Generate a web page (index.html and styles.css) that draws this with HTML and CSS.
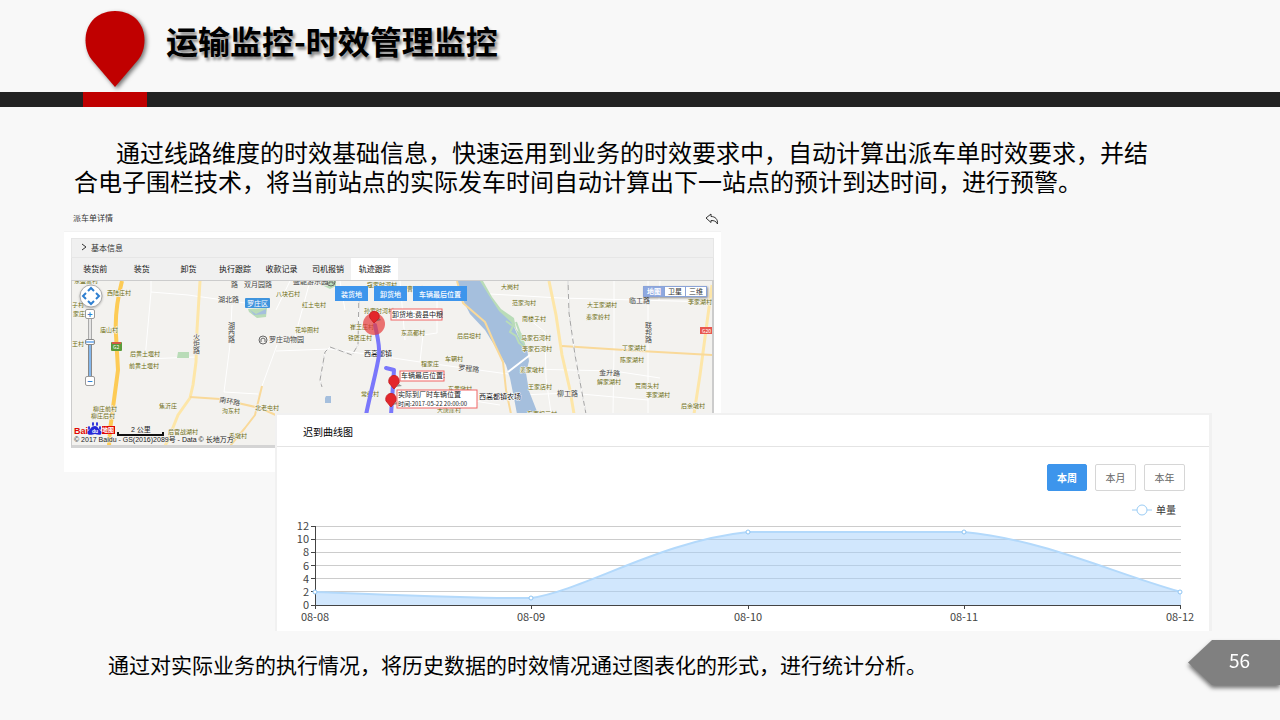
FILE: index.html
```html
<!DOCTYPE html>
<html lang="zh-CN">
<head>
<meta charset="utf-8">
<title>运输监控-时效管理监控</title>
<link rel="stylesheet" href="styles.css">
</head>
<body>
<header class="top">
  <svg class="top-pin" viewBox="0 0 64 80" aria-hidden="true"><path d="M32 77 L9 50 C-3 35 0 2 32 1 C64 2 67 35 55 50 Z"/></svg>
  <h1 class="title">运输监控-时效管理监控</h1>
</header>
<div class="band"><span class="band-mark"></span></div>
<main>
  <p class="intro">通过线路维度的时效基础信息，快速运用到业务的时效要求中，自动计算出派车单时效要求，并结合电子围栏技术，将当前站点的实际发车时间自动计算出下一站点的预计到达时间，进行预警。</p>
  <div class="stage">
    <section class="detail">
      <div class="detail-head">
        <h2>派车单详情</h2>
        <button class="back" aria-label="返回"><svg viewBox="0 0 14 12"><path d="M1 5 L6 1 V3.500 C10 3.500 13 6 12.500 11 C11 8 9 7.500 6 7.500 V9.500 Z"/></svg></button>
      </div>
      <div class="detail-body">
        <button class="fold"><svg viewBox="0 0 6 8"><path d="M1 1 L5 4 L1 7"/></svg>基本信息</button>
        <div class="tabs" role="tablist">
          <button role="tab">装货前</button><button role="tab">装货</button><button role="tab">卸货</button><button role="tab">执行跟踪</button><button role="tab">收款记录</button><button role="tab">司机报销</button><button role="tab" class="on" aria-selected="true">轨迹跟踪</button>
        </div>
        <div class="map">
          <svg class="map-art" viewBox="72 281 640 164" preserveAspectRatio="xMinYMin slice">
            <rect class="land" x="71" y="281" width="643" height="166"/>
            <g class="lane">
              <path d="M151 281 V292 L145 359 L196 357 M151 292 L188 295 L245 303 M232 305 L230 345 L224 392 L258 394 M277 345 L262 386 M276 351 L330 349 L380 356 L420 362 L508 374 M310 281 L294 340 M420 362 L423 335 L437 333 V290 M400 281 L405 340 M490 294 L560 298 L712 302 M614 281 V350 L613 413 M648 281 V413 M530 320 L545 332 L546 378 L551 413 M527 369 L614 371 L660 378 M520 395 L570 393 L648 400 M436 395 L500 405 M290 281 L276 310 M660 281 L659 300 M340 281 L345 310"/>
            </g>
            <path class="river" d="M457 281 H481 L490 296 L500 311 L511 320 L518 336 L527 349 L529 361 L526 373 L529 391 L538 414 H517 L514 398 L510 378 L506 365 L496 348 L485 330 L470 314 L463 300 Z"/>
            <path class="park" d="M480 281 H483 L492 297 L501 309 L514 318 L516 329 L523 337 L526 347 L520 341 L516 330 L511 322 L499 311 L490 297 Z"/>
            <path class="creek" d="M506 321 L513 326 L510 332 L516 336 L519 343 L524 347 M516 322 L520 333 L526 341"/>
            <path class="park" d="M178 352 H189 V358 H177 Z M248 309 L267 308 L266 317 L257 318 L249 312 Z M322 281 H336 V286 L330 289 L322 285 Z"/>
            <path class="water" d="M250 310 L256 314 L266 309 L266 314 L254 315 Z M326 396 H331 V403 H325 V398 Z"/>
            <path class="route-lite" d="M200 281 L197 330 L196 362 L193 385 L190 398 L178 415 L168 440 L165 446 M549 281 L556 315 L562 355 L570 390 L574 414 M712 285 L706 330 L700 375 L694 414"/>
            <path class="route-mid" d="M190 397 L220 399 L260 408 L278 416 M262 386 L255 415 L245 428 L230 446 M562 346 L640 351 L713 355 M457 281 L463 303 L485 322 L495 345 L503 362 L506 390 L511 414"/>
            <path class="route-main" d="M122 281 C117 300 115 320 116 335 L118 370 L114 400 L110 430 L109 446"/>
            <path class="bridge" d="M508 372 L530 355"/>
            <g class="rail"><path d="M568 281 L569 313 L575 355 L586 414 M359 290 L358 345 L352 355 L330 347 L325 352 L320 380 L322 387"/><path class="rail-gap" d="M568 281 L569 313 L575 355 L586 414 M359 290 L358 345 L352 355 L330 347 L325 352 L320 380 L322 387"/></g>
            <g class="village">
              <text x="74" y="283">东盛富村</text><text x="107" y="295">西陆庄村</text><text x="100" y="332">庙山村</text><text x="72" y="307">子村</text><text x="73" y="316">家庄</text><text x="72" y="346">王村</text>
              <text x="130" y="356">后黄土堰村</text><text x="129" y="368">前黄土堰村</text><text x="159" y="408">焦沂庄</text><text x="222" y="413">沟东村</text><text x="255" y="410">北老屯村</text><text x="93" y="411">柳庄前村</text><text x="91" y="418">柳庄后村</text><text x="168" y="434">后官战湖村</text><text x="229" y="438">毛墩村</text>
              <text x="276" y="296">八块石村</text><text x="302" y="307">红土屯村</text><text x="367" y="287">寇家时河村</text><text x="407" y="291">曹家庄</text><text x="364" y="313">孙家时河村</text><text x="295" y="332">花埠圈村</text><text x="350" y="329">崔王庄村</text><text x="348" y="340">铁匠庄村</text><text x="401" y="335">东高都村</text><text x="457" y="338">后后坦村</text><text x="445" y="361">车辋村</text><text x="421" y="366">程家庄</text><text x="361" y="396">常红村</text><text x="448" y="391">东黄墩村</text><text x="437" y="412">大唐崖村</text>
              <text x="501" y="289">大岗村</text><text x="512" y="305">范家沟村</text><text x="587" y="307">大王家湖村</text><text x="586" y="319">秦家岭村</text><text x="688" y="304">李家湖村</text><text x="522" y="321">南楼子村</text><text x="521" y="340">马家石河村</text><text x="522" y="351">李家石河村</text><text x="520" y="372">姜家墩村</text><text x="528" y="389">王家店村</text><text x="622" y="350">丁家湖村</text><text x="620" y="362">陈家湖村</text><text x="597" y="384">解家湖村</text><text x="635" y="388">荒南头村</text><text x="646" y="397">李家湖村</text><text x="681" y="408">后余墩村</text><text x="527" y="416">东南坦三村</text>
            </g>
            <g class="road-name">
              <text x="231" y="287">路</text><text x="244" y="287">双月园路</text><text x="218" y="302">湖北路</text><text x="228" y="328">湖</text><text x="228" y="335">西</text><text x="228" y="342">路</text><text x="193" y="339">火</text><text x="193" y="346">炬</text><text x="193" y="353">路</text><text x="219" y="402" transform="rotate(10 219 402)">南环路</text><text x="269" y="342">罗庄动物园</text><text x="293" y="284">盛能游乐园</text><text x="458" y="370" transform="rotate(6 458 370)">罗程路</text><text x="629" y="303">临工路</text><text x="599" y="375" transform="rotate(3 599 375)">金升路</text><text x="557" y="396">柳工路</text><text x="645" y="328">联</text><text x="645" y="335">邦</text><text x="645" y="342">路</text>
            </g>
            <g class="town"><text x="364" y="356">西高都镇</text><text x="479" y="399">西高都镇农场</text></g>
            <g class="poi"><circle cx="263" cy="340" r="4"/><path d="M261 342 V339 L263 338 L265 339 V342"/><circle cx="331" cy="282" r="4"/><path d="M329 284 V282 H333 V284"/></g>
            <rect class="district" x="245" y="298" width="25" height="10" rx="1"/><text class="district-name" x="247" y="306">罗庄区</text>
            <rect class="shield-green" x="111" y="342" width="11" height="9" rx="1"/><path class="shield-top" d="M112 342 H121 V344 H112 Z"/><text class="shield-text" x="113" y="349">G2</text>
            <rect class="shield-red" x="700" y="327" width="14" height="7"/><text class="shield-text" x="702" y="333">G20</text>
            <path class="track" d="M375 325 C377 335 380 345 379 355 C377 370 371 390 366 415 M386 368 L394 370 L393 385 L391 415"/>
            <circle class="halo" cx="374" cy="324" r="11"/>
            <path class="shade" d="M374 322 L379 318 L381 320 Z M395 387 L399 384 L402 386 Z M392 405 L396 402 L399 404 Z"/>
            <g class="pins"><path d="M374 323 L370 318 C367 309 381 309 379 318 Z"/><path d="M394 389 L389 383 C387 373 401 373 399 383 Z"/><path d="M391 407 L386 401 C384 391 398 391 396 401 Z"/></g>
            <g class="tips">
              <rect x="391" y="309" width="51" height="11"/><rect x="400" y="371" width="44" height="10"/><rect x="397" y="390" width="80" height="18"/>
              <text x="392" y="317">卸货地:费县中粮</text><text x="401" y="378">车辆最后位置:</text><text x="398" y="397">实际到厂时车辆位置</text><text x="398" y="406" class="stamp">时间:2017-05-22 20:00:00</text>
            </g>
            <g class="baidu"><text class="baidu-red" x="74" y="434">Bai</text><path class="paw" d="M95 426 C91 426 91 429 88 431 C86 436 92 435 95 434 C98 435 103 436 101 431 C98 429 98 426 95 426 Z"/><ellipse cx="89" cy="428" rx="1" ry="2"/><ellipse cx="93" cy="424" rx="1" ry="2"/><ellipse cx="97" cy="424" rx="1" ry="2"/><ellipse cx="100" cy="428" rx="1" ry="2"/><text class="baidu-du" x="92" y="433">du</text><rect class="baidu-box" x="102" y="426" width="13" height="8"/><text class="baidu-cn" x="102" y="432">地图</text></g>
            <path class="scale-line" d="M118 432 V435 H163 V432"/><text class="scale-text" x="131" y="432">2 公里</text>
            <text class="copy" x="74" y="442">© 2017 Baidu - GS(2016)2089号 - Data © 长地万方</text>
          </svg>
          <div class="pan"><svg viewBox="0 0 24 24" aria-hidden="true"><circle cx="12" cy="12" r="11"/><path d="M9 7 L12 4 L15 7 M9 17 L12 20 L15 17 M7 9 L4 12 L7 15 M17 9 L20 12 L17 15"/></svg></div>
          <div class="zoom">
            <button aria-label="放大">+</button><input type="range" min="0" max="10" value="6" aria-label="缩放级别"><button aria-label="缩小">−</button>
          </div>
          <div class="spots"><button>装货地</button><button>卸货地</button><button>车辆最后位置</button></div>
          <div class="kinds"><button class="on">地图</button><button>卫星</button><button>三维</button></div>
        </div>
      </div>
    </section>
    <section class="curve">
      <h2 class="curve-head">迟到曲线图</h2>
      <div class="periods"><button class="on">本周</button><button>本月</button><button>本年</button></div>
      <div class="legend"><svg viewBox="0 0 20 12" aria-hidden="true"><path d="M0 6 H20"/><circle cx="10" cy="6" r="5"/></svg>单量</div>
      <svg class="plot" viewBox="277 520 932 111" role="img" aria-label="迟到曲线图">
        <path class="grid" d="M315 526.500 H1181 M315 539.500 H1181 M315 552.500 H1181 M315 565.500 H1181 M315 578.500 H1181 M315 591.500 H1181"/>
        <path class="area" d="M315 592 C423 596 490 599 531 598 C585 590 660 541 748 532 C790 532 920 532 964 532 C1045 540 1110 572 1181 592 V605 H315 Z"/>
        <path class="line" d="M315 592 C423 596 490 599 531 598 C585 590 660 541 748 532 C790 532 920 532 964 532 C1045 540 1110 572 1181 592"/>
        <path class="axis" d="M315.500 526 V609 M311 605.500 H1181 M311 526.500 H315 M311 539.500 H315 M311 552.500 H315 M311 565.500 H315 M311 578.500 H315 M311 591.500 H315 M531.500 605 V609 M748.500 605 V609 M964.500 605 V609 M1180.500 605 V609"/>
        <g class="dots"><circle cx="315" cy="592" r="2"/><circle cx="531" cy="598" r="2"/><circle cx="748" cy="532" r="2"/><circle cx="964" cy="532" r="2"/><circle cx="1180" cy="592" r="2"/></g>
        <g class="y-text"><text x="309" y="530">12</text><text x="309" y="543">10</text><text x="309" y="556">8</text><text x="309" y="570">6</text><text x="309" y="583">4</text><text x="309" y="596">2</text><text x="309" y="609">0</text></g>
        <g class="x-text"><text x="315" y="621">08-08</text><text x="531" y="621">08-09</text><text x="748" y="621">08-10</text><text x="964" y="621">08-11</text><text x="1180" y="621">08-12</text></g>
      </svg>
    </section>
  </div>
</main>
<footer class="bottom">
  <p>通过对实际业务的执行情况，将历史数据的时效情况通过图表化的形式，进行统计分析。</p>
  <div class="page"><span>56</span></div>
</footer>
</body>
</html>
```
FILE: styles.css
```css
* { box-sizing: border-box; }
body { margin: 0; background: #f8f8f8; color: #000; font-family: "Noto Sans CJK SC", sans-serif; }
h1, h2, p { margin: 0; font-weight: 400; }
button { margin: 0; padding: 0; border: 0; background: none; font: inherit; color: inherit; cursor: pointer; }
svg { display: block; }

.top { display: flex; gap: 19px; height: 92px; padding: 10px 83px 0; }
.top-pin { width: 64px; height: 80px; fill: #c00000; filter: drop-shadow(2px 2px 2px #0008); }
.title { font-size: 32px; line-height: 60px; font-weight: 700; text-shadow: 2px 3px 3px #0007; }
.band { height: 15px; padding-left: 83px; background: #222; }
.band-mark { display: block; width: 64px; height: 15px; background: #c00000; }

.intro { padding: 30px 130px 0 74px; font-size: 24px; line-height: 29px; text-indent: 42px; }
.stage { display: grid; grid-template-columns: 211fr 446fr 491fr; grid-template-rows: 206px 59px auto; padding: 12px 68px 0 64px; }
.detail { grid-area: 1 / 1 / 3 / 3; display: flex; flex-direction: column; font-size: 8px; color: #333; }
.detail-head { display: flex; justify-content: space-between; align-items: center; height: 25px; padding: 0 2px 0 9px; border-bottom: 1px solid #f2f2f2; }
.detail-head h2 { font-size: 8px; line-height: 12px; padding-bottom: 2px; }
.back svg { width: 14px; height: 12px; fill: none; stroke: #333; }
.detail-body { flex: 1; padding: 6px 7px 24px; background: #fff; }
.fold { display: flex; align-items: center; gap: 4px; width: 100%; height: 20px; padding: 0 0 2px 9px; border: 1px solid #e6e6e6; background: #f0f0f0; }
.fold svg { width: 6px; height: 8px; fill: none; stroke: #333; }
.tabs { display: flex; height: 22px; padding-right: 49%; border: 1px solid #e2e2e2; border-width: 0 1px; background: #f0f0f0; color: #111; }
.tabs button { flex: 1; padding-bottom: 2px; white-space: nowrap; }
.tabs .on { background: #fff; }

.map { position: relative; height: 168px; border: 1px solid #ccc; border-width: 1px 2px 3px 1px; border-color: #ccc #ccc #d4d4d4; overflow: hidden; }
.map-art { width: 100%; height: 100%; }
.land { fill: #f3f2ef; }
.lane, .bridge { fill: none; stroke: #fff; stroke-width: 1; }
.bridge { stroke-width: 2; }
.river, .water { fill: #a5bfdd; }
.park { fill: #b9dcb8; }
.creek { fill: none; stroke: #b9dcb8; stroke-width: 2; }
.route-lite, .route-mid, .route-main { fill: none; stroke-linejoin: round; stroke: #fde6a8; stroke-width: 3; }
.route-mid { stroke: #f9d999; stroke-width: 2; }
.route-main { stroke: #fdcb55; stroke-width: 4; }
.rail { fill: none; stroke: #a5a5a5; stroke-width: 1; }
.rail-gap { stroke: #fff; stroke-dasharray: 4 5; }
.village { font-size: 6px; fill: #6d6b12; }
.road-name { font-size: 7px; fill: #444; }
.road-name text, .village text { paint-order: stroke; stroke: #f7f7f3; stroke-width: 1; }
.town { font-size: 7px; fill: #111; paint-order: stroke; stroke: #fff; stroke-width: 1; }
.poi { fill: none; stroke: #666; stroke-width: 1; }
.district { fill: #3f94dd; }
.district-name { font-size: 7px; fill: #fff; }
.shield-green { fill: #5b9c3a; }
.shield-top { fill: #d65a43; }
.shield-red { fill: #e8574f; }
.shield-text { font-size: 5px; fill: #fff; }
.track { fill: none; stroke: #7a77fb; stroke-width: 4; stroke-linecap: round; stroke-linejoin: round; }
.halo { fill: #e63a3a; opacity: .7; }
.shade { fill: #555; opacity: .6; }
.pins { fill: #e3262b; stroke: #c82226; stroke-width: 1; }
.tips rect { fill: #fff; stroke: #f06464; }
.tips text { font-family: "Liberation Sans", "Noto Sans CJK SC", sans-serif; font-size: 7px; fill: #222; }
.tips .stamp { font-family: "Noto Sans CJK SC", sans-serif; font-size: 6px; }
.baidu { fill: #2529d8; font-family: "Liberation Sans", "Noto Sans CJK SC", sans-serif; font-weight: 700; }
.baidu-red { font-size: 9px; fill: #e10602; }
.baidu-du { font-size: 5px; fill: #fff; }
.baidu-box { fill: #e10602; }
.baidu-cn { font-size: 6px; fill: #fff; }
.scale-line { fill: none; stroke: #111; stroke-width: 2; }
.scale-text, .copy { font-family: "Liberation Sans", "Noto Sans CJK SC", sans-serif; font-size: 7px; fill: #222; paint-order: stroke; stroke: #f3f2ef; stroke-width: 1; }

.pan { position: absolute; left: 7px; top: 3px; }
.pan svg { width: 24px; height: 24px; filter: drop-shadow(0 1px 1px #0004); }
.pan circle { fill: #fff; stroke: #aaa; }
.pan path { fill: none; stroke: #2f7fd0; stroke-width: 2; }
.zoom { position: absolute; left: 13px; top: 28px; display: flex; flex-direction: column; align-items: center; }
.zoom button { width: 10px; height: 10px; border: 1px solid #999; border-radius: 2px; background: #fff; color: #2f7fd0; font-size: 9px; line-height: 7px; font-weight: 700; }
.zoom input { appearance: none; writing-mode: vertical-lr; direction: rtl; width: 10px; height: 57px; margin: 0; background: linear-gradient(90deg, transparent 3px, #aaa 3px 4px, #e4e4e4 4px 6px, #aaa 6px 7px, transparent 7px) no-repeat 0 0 / 10px 24px, linear-gradient(90deg, transparent 3px, #888 3px 4px, #83b7ec 4px 6px, #888 6px 7px, transparent 7px) no-repeat 0 24px / 10px 33px; }
.zoom input::-webkit-slider-thumb { appearance: none; width: 10px; height: 6px; border: 1px solid #888; border-radius: 2px; background: linear-gradient(#fff 1px, #8bbcf0 1px 3px, #fff 3px); }
.spots { position: absolute; left: 263px; top: 5px; display: flex; gap: 6px; }
.spots button { height: 15px; padding: 0 6px; background: #3d95ec; color: #fff; font-size: 7px; line-height: 14px; font-weight: 500; white-space: nowrap; }
.kinds { position: absolute; right: 5px; top: 5px; display: flex; border: 1px solid #8ba4d8; background: #fff; box-shadow: 1px 1px 2px #0006; }
.kinds button { width: 20px; height: 9px; font-size: 7px; line-height: 9px; }
.kinds button + button { width: 21px; border-left: 1px solid #8ba4d8; }
.kinds .on { background: #8ea8e0; color: #fff; font-weight: 700; }

.curve { position: relative; z-index: 1; grid-area: 2 / 2 / 4 / 4; display: flex; flex-direction: column; border: 2px solid #f1f1f1; border-right-width: 3px; border-bottom: 0; background: #fff; }
.curve-head { height: 32px; padding-left: 26px; border-bottom: 1px solid #e4e4e4; font-size: 10px; line-height: 33px; }
.periods { display: flex; justify-content: flex-end; gap: 8px; padding: 17px 24px 0 0; font-size: 10px; color: #666; }
.periods button { width: 41px; height: 27px; border: 1px solid #d6d6d6; border-radius: 2px; }
.periods .on { width: 40px; border-color: #3d95ec; background: #3d95ec; color: #fff; font-weight: 700; }
.legend { display: flex; justify-content: flex-end; align-items: center; gap: 4px; height: 15px; margin-top: 11px; padding-right: 33px; font-size: 10px; color: #333; }
.legend svg { width: 20px; height: 12px; fill: #fff; stroke: #9accf5; }
.plot { width: 100%; margin-top: 3px; }
.grid { stroke: #ccc; }
.area { fill: #a3cffb; opacity: .5; }
.line { fill: none; stroke: #b3d9fb; stroke-width: 2; }
.axis { fill: none; stroke: #444; }
.dots { fill: #fff; stroke: #8ec4f2; }
.y-text, .x-text { font-size: 11px; fill: #444; text-anchor: middle; }
.y-text { text-anchor: end; }

.bottom { display: flex; justify-content: space-between; align-items: flex-start; padding: 9px 0 30px 108px; }
.bottom p { font-size: 21px; line-height: 48px; }
.page { filter: drop-shadow(0 3px 2px #0008); }
.page span { display: block; width: 92px; height: 45px; padding-left: 41px; background: #808080; clip-path: polygon(0 50%, 24px 0, 100% 0, 100% 100%, 24px 100%); color: #fff; font-size: 19px; line-height: 40px; }
```
